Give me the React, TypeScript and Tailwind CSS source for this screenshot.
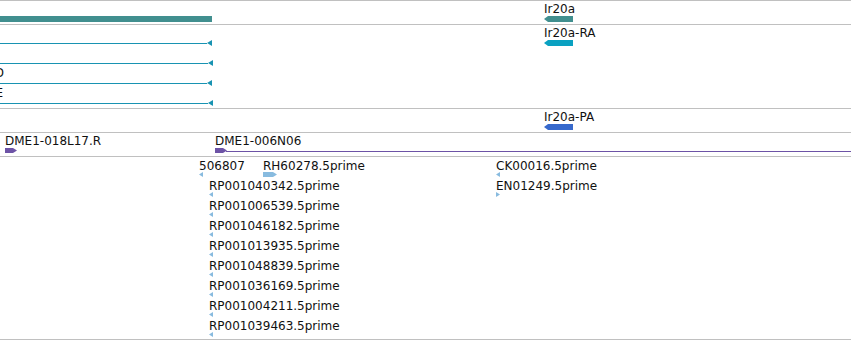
import React from "react";

type GlyphKind = "leftBox" | "rightBox" | "leftTri" | "rightTri";

// strand glyphs drawn as svg polygons
const Glyph = ({ kind, w = 4, h = 5, color }: { kind: GlyphKind; w?: number; h?: number; color: string }) => {
  const pts =
    kind === "leftBox"
      ? `0,${h / 2} 4,0 ${w},0 ${w},${h} 4,${h}`
      : kind === "rightBox"
      ? `0,0 ${w - 4},0 ${w},${h / 2} ${w - 4},${h} 0,${h}`
      : kind === "leftTri"
      ? `0,${h / 2} ${w},0 ${w},${h}`
      : `0,0 ${w},${h / 2} 0,${h}`;
  return (
    <svg className="block shrink-0" width={w} height={h}>
      <polygon points={pts} fill={color} />
    </svg>
  );
};

// a named feature on the track canvas: label above its glyph
const Feature = ({
  className,
  label,
  children,
}: {
  className: string;
  label: string;
  children: React.ReactNode;
}) => (
  <div className={`absolute flex flex-col items-start ${className}`}>
    <span className="whitespace-nowrap text-[12px] leading-[12px] text-[#111]">{label}</span>
    {children}
  </div>
);

const TX_LINE = "#1893b2";
const EST = "#88bbdf";
const PURPLE = "#6d53a6";

const txEnds = ["w-[212px]", "w-[213px]", "w-[212px]", "w-[213px]"];

const rpRows = [
  "RP001040342.5prime",
  "RP001006539.5prime",
  "RP001046182.5prime",
  "RP001013935.5prime",
  "RP001048839.5prime",
  "RP001036169.5prime",
  "RP001004211.5prime",
  "RP001039463.5prime",
];

export default function App() {
  return (
    <div
      className="flex flex-col w-[851px] h-[340px] bg-white overflow-hidden"
      style={{ fontFamily: '"DejaVu Sans", "Liberation Sans", sans-serif' }}
    >
      {/* gene track */}
      <div className="relative h-[25px] shrink-0 border-y border-[#c0c0c0] pt-[15px]">
        <div className="w-[212px] h-[6px] bg-[#418f8f]" />
        <Feature className="left-[544px] top-[2px] gap-px" label="Ir20a">
          <Glyph kind="leftBox" w={29} h={6} color="#418f8f" />
        </Feature>
      </div>

      {/* transcript track */}
      <div className="relative h-[84px] shrink-0 border-b border-[#c0c0c0] pt-[15px]">
        <div className="flex flex-col gap-[14px]">
          {txEnds.map((w, i) => (
            <div key={i} className={`flex items-start h-[6px] ${w}`}>
              <div className="flex-1 h-px mt-[3px]" style={{ background: TX_LINE }} />
              <Glyph kind="leftTri" w={5} h={6} color={TX_LINE} />
            </div>
          ))}
        </div>
        <span className="absolute right-[847px] top-[42px] text-[12px] leading-[12px] text-[#111]">D</span>
        <span className="absolute right-[848px] top-[62px] text-[12px] leading-[12px] text-[#111]">E</span>
        <Feature className="left-[544px] top-[2px] gap-px" label="Ir20a-RA">
          <Glyph kind="leftBox" w={29} h={6} color="#0aa1c1" />
        </Feature>
      </div>

      {/* protein track */}
      <div className="relative h-[24px] shrink-0 border-b border-[#c0c0c0]">
        <Feature className="left-[544px] top-[2px] gap-px" label="Ir20a-PA">
          <Glyph kind="leftBox" w={29} h={6} color="#3769cc" />
        </Feature>
      </div>

      {/* clone track */}
      <div className="relative h-[24px] shrink-0 border-b border-[#c0c0c0]">
        <Feature className="left-[5px] top-[2px] gap-px" label="DME1-018L17.R">
          <Glyph kind="rightBox" w={12} h={5} color={PURPLE} />
        </Feature>
        <Feature className="left-[215px] right-0 top-[2px] gap-px" label="DME1-006N06">
          <div className="flex items-start w-full">
            <Glyph kind="rightBox" w={12} h={5} color={PURPLE} />
            <div className="flex-1 h-px mt-[3px] -ml-px" style={{ background: PURPLE }} />
          </div>
        </Feature>
      </div>

      {/* EST track */}
      <div className="relative h-[183px] shrink-0 border-b border-[#c0c0c0]">
        <Feature className="left-[199px] top-[3px]" label="506807">
          <Glyph kind="leftTri" color={EST} />
        </Feature>
        <Feature className="left-[263px] top-[3px]" label="RH60278.5prime">
          <Glyph kind="rightBox" w={14} h={5} color={EST} />
        </Feature>
        <div className="absolute left-[496px] top-[3px] flex flex-col gap-[3px]">
          <div className="flex flex-col">
            <span className="text-[12px] leading-[12px] text-[#111]">CK00016.5prime</span>
            <Glyph kind="leftTri" color={EST} />
          </div>
          <div className="flex flex-col">
            <span className="text-[12px] leading-[12px] text-[#111]">EN01249.5prime</span>
            <Glyph kind="rightTri" color={EST} />
          </div>
        </div>
        <div className="absolute left-[209px] top-[23px] flex flex-col gap-[3px]">
          {rpRows.map((name) => (
            <div key={name} className="flex flex-col">
              <span className="text-[12px] leading-[12px] text-[#111]">{name}</span>
              <Glyph kind="leftTri" color={EST} />
            </div>
          ))}
        </div>
      </div>
    </div>
  );
}
